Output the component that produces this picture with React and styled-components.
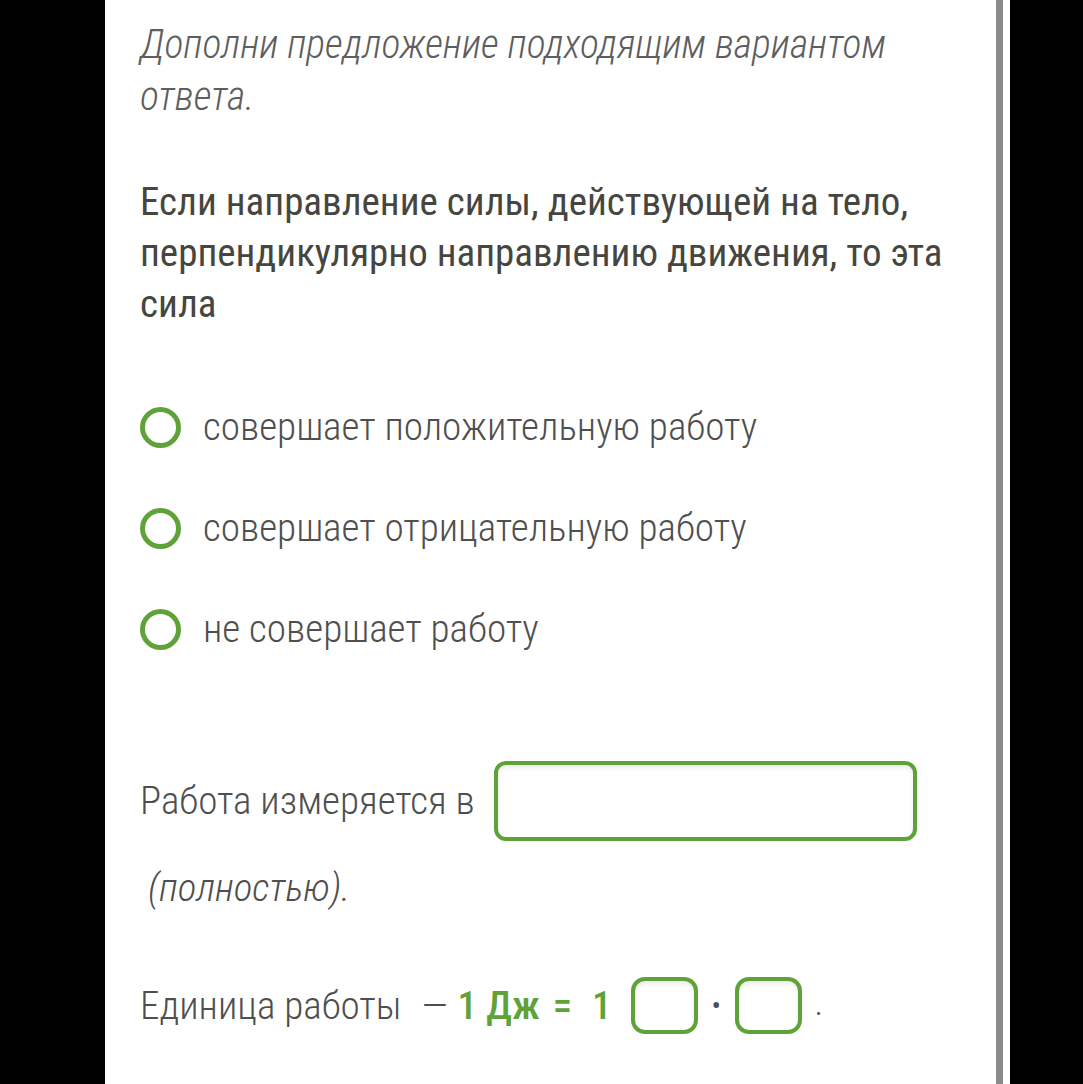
import React from 'react';
import styled, { createGlobalStyle } from 'styled-components';

const GREEN = '#5fa238';

const Global = createGlobalStyle`
  html, body {
    margin: 0;
    padding: 0;
    background: #000;
  }
  #root {
    min-height: 100vh;
  }
`;

const Screen = styled.div`
  display: flex;
  height: 1084px;
  overflow: hidden;
  background: #000;
  font-family: Roboto, 'Noto Sans', sans-serif;
  font-stretch: condensed;
  font-weight: 350;
`;

const Gutter = styled.div`
  width: 105px;
  flex-shrink: 0;
  background: #000;
`;

const Panel = styled.main`
  width: 891px;
  flex-shrink: 0;
  background: #fff;
  padding: 19px 40px 0 35px;
  box-sizing: border-box;
  display: flex;
  flex-direction: column;
`;

const Scrollbar = styled.div`
  width: 7px;
  flex-shrink: 0;
  background: #8a8a8a;
`;

const Edge = styled.div`
  width: 7px;
  flex-shrink: 0;
  background: #fff;
`;

const Hint = styled.p`
  margin: 0;
  font-size: 39.8px;
  line-height: 52px;
  font-style: italic;
  color: #5e5e5e;
`;

const Question = styled.p`
  margin: 54px 0 0;
  font-size: 39px;
  line-height: 51px;
  font-weight: 440;
  color: #46463f;
`;

const Options = styled.ul`
  list-style: none;
  margin: 67px 0 0;
  padding: 0;
  display: flex;
  flex-direction: column;
  gap: 41px;
`;

const Option = styled.li`
  display: flex;
  align-items: center;
  gap: 22px;
  height: 60px;
  font-size: 39.15px;
  color: #4f4f4f;
`;

const Radio = styled.span`
  width: 41px;
  height: 41px;
  box-sizing: border-box;
  border: 5px solid ${GREEN};
  border-radius: 50%;
  flex-shrink: 0;
`;

const Line = styled.div`
  display: flex;
  align-items: center;
  margin-top: ${(p) => p.$top}px;
  font-size: 39.15px;
  color: #4f4f4f;
  gap: ${(p) => p.$gap || 0}px;
`;

const Blank = styled.span`
  display: inline-block;
  box-sizing: border-box;
  width: ${(p) => p.$w}px;
  height: ${(p) => p.$h}px;
  margin-left: ${(p) => p.$ml || 0}px;
  border: 4px solid ${GREEN};
  border-radius: ${(p) => p.$r}px;
  box-shadow: inset 0 3px 4px rgba(0, 0, 0, 0.08);
  flex-shrink: 0;
`;

const Note = styled.p`
  margin: 22px 0 0 8px;
  font-size: 39.15px;
  line-height: 51px;
  font-style: italic;
  color: #4f4f4f;
`;

const Accent = styled.span`
  color: ${GREEN};
  font-weight: 500;
  margin-left: ${(p) => p.$ml || 0}px;
`;

const Dash = styled.span`
  margin-left: 20px;
`;

const Dot = styled.span`
  margin: 0 ${(p) => p.$mr}px 0 ${(p) => p.$ml}px;
  font-size: 28px;
  font-weight: 400;
`;

const options = [
  'совершает положительную работу',
  'совершает отрицательную работу',
  'не совершает работу',
];

export default function App() {
  return (
    <>
      <Global />
      <Screen>
        <Gutter />
        <Panel>
          <Hint>Дополни предложение подходящим вариантом ответа.</Hint>
          <Question>
            Если направление силы, действующей на тело, перпендикулярно направлению движения, то эта
            сила
          </Question>
          <Options>
            {options.map((o) => (
              <Option key={o}>
                <Radio />
                {o}
              </Option>
            ))}
          </Options>
          <Line $top={102} $gap={19}>
            Работа измеряется в
            <Blank $w={423} $h={80} $r={12} />
          </Line>
          <Note>(полностью).</Note>
          <Line $top={63}>
            Единица работы
            <Dash>—</Dash>
            <Accent $ml={10}>1 Дж</Accent>
            <Accent $ml={13}>=</Accent>
            <Accent $ml={20}>1</Accent>
            <Blank $w={67} $h={57} $r={14} $ml={19} />
            <Dot $ml={14} $mr={14}>•</Dot>
            <Blank $w={67} $h={57} $r={14} />
            <Dot $ml={13} $mr={0}>.</Dot>
          </Line>
        </Panel>
        <Scrollbar />
        <Edge />
      </Screen>
    </>
  );
}
